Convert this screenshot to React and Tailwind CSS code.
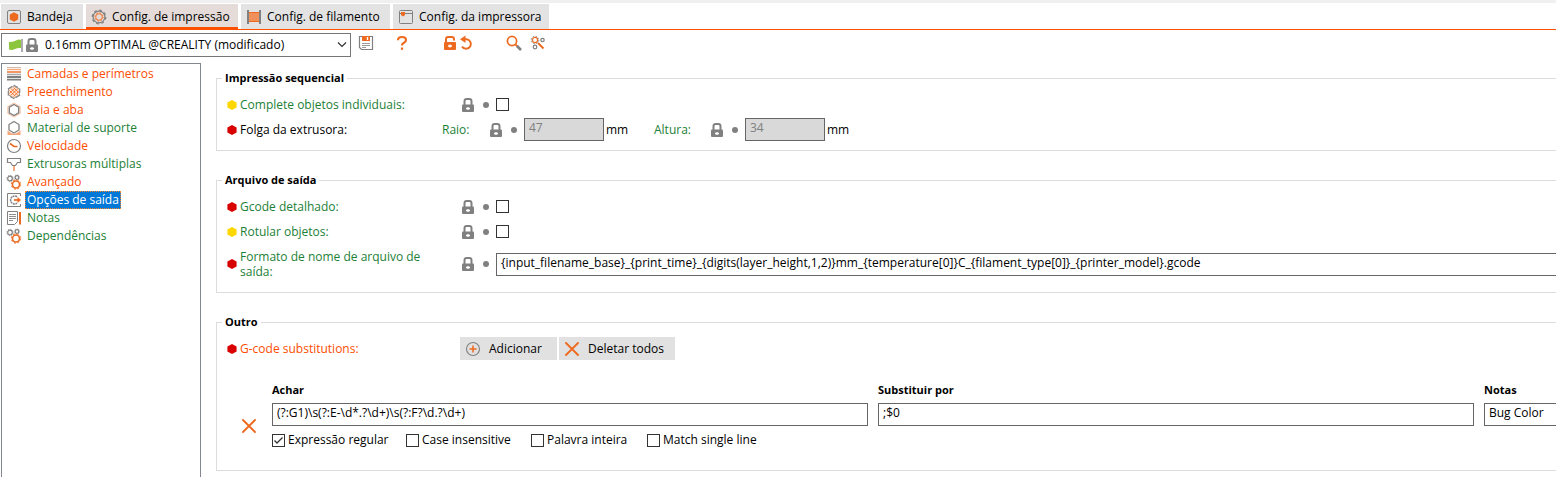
import { useState } from "react";

const GRAY = "#808080";
const ORANGE = "#ed6b21";

function Svg({ w = 16, h = 16, className = "", children }) {
  return (
    <svg width={w} height={h} viewBox={`0 0 ${w} ${h}`} fill="none" className={`shrink-0 ${className}`} aria-hidden="true">
      {children}
    </svg>
  );
}

function LockIcon() {
  return (
    <Svg w={12} h={14}>
      <path d="M2.5 8V3.2Q2.5 1 4.7 1H7.3Q9.5 1 9.5 3.2V8" stroke={GRAY} strokeWidth="2" />
      <rect y="6.5" width="12" height="7.5" rx="1" fill={GRAY} />
      <path d="M4 10.5H8M6 9V12" stroke="#fff" strokeWidth="1.3" />
    </Svg>
  );
}

function UnlockIcon() {
  return (
    <Svg w={12} h={14}>
      <path d="M2 8V3.2Q2 1 4.2 1H7.8Q10 1 10 3.2V4.5" stroke={ORANGE} strokeWidth="2" />
      <rect y="6" width="12" height="8" rx="1" fill={ORANGE} />
      <path d="M4 10H8M6 8.5V11.5" stroke="#fff" strokeWidth="1.3" />
    </Svg>
  );
}

function CrossIcon({ size = 14 }) {
  return (
    <svg width={size} height={size} viewBox="0 0 14 14" className="shrink-0" aria-hidden="true">
      <path d="M1 1L13 13M13 1L1 13" stroke={ORANGE} strokeWidth="1.9" strokeLinecap="round" />
    </svg>
  );
}

const Gears = () => (
  <Svg>
    <circle cx="4" cy="4.5" r="2.3" stroke={GRAY} strokeWidth="1.2" />
    <circle cx="4" cy="4.5" r="3.2" stroke={GRAY} strokeWidth="0.8" strokeDasharray="1.2 1.3" />
    <circle cx="11" cy="3.5" r="1.8" stroke={GRAY} strokeWidth="1.2" />
    <circle cx="11" cy="3.5" r="2.6" stroke={GRAY} strokeWidth="0.7" strokeDasharray="1 1" />
    <circle cx="10" cy="10.5" r="3.5" stroke={ORANGE} strokeWidth="1.6" />
    <circle cx="10" cy="10.5" r="4.7" stroke={ORANGE} strokeWidth="1" strokeDasharray="1.9 1.8" />
  </Svg>
);

const HEX = "M8 1.8L13.4 4.9V11.1L8 14.2L2.6 11.1V4.9Z";

const icons = {
  plater: (
    <Svg>
      <rect x="1.5" y="1.5" width="13" height="13" rx="1.5" stroke={GRAY} />
      <path d="M8 3.2L12.2 5.6V10.4L8 12.8L3.8 10.4V5.6Z" fill={ORANGE} />
    </Svg>
  ),
  print: (
    <Svg>
      <circle cx="8" cy="8" r="5.9" stroke={GRAY} strokeWidth="1.2" />
      <circle cx="8" cy="8" r="6.8" stroke={GRAY} strokeWidth="1.2" strokeDasharray="2.7 2.64" />
      <circle cx="8" cy="8" r="3.3" stroke={ORANGE} strokeWidth="0.9" />
      <circle cx="8" cy="8" r="4.1" stroke={ORANGE} strokeWidth="0.9" strokeDasharray="1.6 1.62" />
    </Svg>
  ),
  filament: (
    <Svg>
      <rect x="2.5" y="3" width="11" height="10" fill="#f0905a" />
      <path d="M2.5 3.5H13.5M2.5 12.5H13.5" stroke={ORANGE} />
      <path d="M2 1V15M14 1V15" stroke={GRAY} strokeWidth="2" />
    </Svg>
  ),
  printer: (
    <Svg>
      <rect x="1.5" y="1.5" width="13" height="13" rx="1" stroke={GRAY} />
      <path d="M2 4.5H14" stroke={GRAY} />
      <path d="M3 3H7V6L5 7.5L3 6Z" fill={ORANGE} />
    </Svg>
  ),
  layers: (
    <Svg>
      <path d="M1 1.5H15" stroke="#d0b8ac" />
      <path d="M1 3.5H15" stroke="#f4a97e" strokeWidth="1.4" />
      <path d="M1 6H15" stroke={ORANGE} strokeWidth="1.4" />
      <path d="M1 8.5H15" stroke="#aaaaaa" strokeWidth="1.6" />
      <path d="M1 11H15M1 13.7H15" stroke={GRAY} strokeWidth="1.8" />
    </Svg>
  ),
  infill: (
    <Svg>
      <path d={HEX} stroke={GRAY} strokeWidth="1.8" strokeDasharray="4.2 2" />
      <path d={HEX} fill="#fde3d3" stroke={GRAY} strokeWidth="0.8" />
      <path
        d="M3.5 6.5L9.5 12.5M5.2 4.8L11.8 11.2M7.5 3.5L12.7 8.7M3.5 9.5L9.5 3.5M4.5 11.5L12 4.500M7.500 12.500L12.700 7.500"
        stroke={ORANGE}
        strokeWidth="0.8"
      />
    </Svg>
  ),
  skirt: (
    <Svg>
      <path d="M8 1L14.2 4.500V11.500L8 15L1.800 11.500V4.500Z" stroke="#f8c09e" />
      <path d="M8 2.500L12.700 5.200V10.800L8 13.500L3.300 10.800V5.200Z" stroke={GRAY} strokeWidth="1.4" />
    </Svg>
  ),
  support: (
    <Svg>
      <path d="M1.500 10.500L5 13L8 14L11 13L14.500 10.500V15H1.500Z" fill="#f5a679" />
      <path d="M8 1.500L13 4.500V10L8 13L3 10V4.500Z" fill="#fff" stroke={GRAY} strokeWidth="1.3" />
    </Svg>
  ),
  speed: (
    <Svg>
      <circle cx="8" cy="8" r="6.500" stroke={GRAY} strokeWidth="1.200" />
      <path d="M4 5.500L8 8.500H11.500" stroke={ORANGE} strokeWidth="1.600" />
    </Svg>
  ),
  extruders: (
    <Svg>
      <path d="M1.500 2.500H14.500V6.500H11.500L9.500 9.500H6.500L4.500 6.500H1.500Z" stroke={GRAY} strokeWidth="1.200" />
      <path d="M8 10V15" stroke="#f4a272" strokeWidth="1.800" />
    </Svg>
  ),
  gears: <Gears />,
  output: (
    <Svg>
      <path d="M14.500 4V1.500H1.500V14.500H14.500V12" stroke={GRAY} />
      <path d="M11 4.800A4 4 0 1 0 11 11.200" stroke={GRAY} strokeWidth="1.500" strokeDasharray="2 0.600" />
      <path d="M8 8H13" stroke={ORANGE} strokeWidth="1.800" />
      <path d="M11.500 5L15 8L11.500 11Z" fill={ORANGE} />
    </Svg>
  ),
  notes: (
    <Svg>
      <path d="M11.500 1.500H1.500V14.500H8.500L11.500 11.500Z" stroke={GRAY} />
      <path d="M3 4.500H10M3 6.500H10M3 8.500H10M3 10.500H7" stroke={GRAY} strokeWidth="0.900" />
      <path d="M14 2V14.500" stroke={ORANGE} strokeWidth="2" />
    </Svg>
  ),
};

const tabs = [
  { icon: "plater", label: "Bandeja", width: "w-[82px]" },
  { icon: "print", label: "Config. de impressão", width: "w-[152px]", active: true },
  { icon: "filament", label: "Config. de filamento", width: "w-[149px]" },
  { icon: "printer", label: "Config. da impressora", width: "w-[156px]" },
];

const pages = [
  { icon: "layers", label: "Camadas e perímetros", changed: true },
  { icon: "infill", label: "Preenchimento", changed: true },
  { icon: "skirt", label: "Saia e aba", changed: true },
  { icon: "support", label: "Material de suporte" },
  { icon: "speed", label: "Velocidade", changed: true },
  { icon: "extruders", label: "Extrusoras múltiplas" },
  { icon: "gears", label: "Avançado", changed: true },
  { icon: "output", label: "Opções de saída" },
  { icon: "notes", label: "Notas" },
  { icon: "gears", label: "Dependências" },
];

function Checkbox({ id, defaultChecked }) {
  const [on, setOn] = useState(!!defaultChecked);
  return (
    <span className="grid shrink-0">
      <input
        id={id}
        type="checkbox"
        checked={on}
        onChange={(e) => setOn(e.target.checked)}
        className="col-start-1 row-start-1 size-[13px] appearance-none border border-[#333] bg-white"
      />
      {on && (
        <Svg w={13} h={13} className="pointer-events-none col-start-1 row-start-1">
          <path d="M2.500 6.500L5 9L10.500 3.500" stroke="#333" strokeWidth="1.300" />
        </Svg>
      )}
    </span>
  );
}

function ModeDot({ color }) {
  return (
    <Svg w={10} h={10}>
      <path d="M5 0L9.600 2.500V7.500L5 10L0.400 7.500V2.500Z" fill={color} />
    </Svg>
  );
}

function Marks() {
  return (
    <span className="flex shrink-0 items-center gap-[9px] pr-[7px]">
      <LockIcon />
      <span className="size-1.5 rounded-full bg-[#808080]" />
    </span>
  );
}

const RED = "#d90000";
const YELLOW = "#ffd700";
const field = "h-[23px] border border-[#666] bg-white pb-1 pl-1 text-black outline-none";

function Group({ title, children }) {
  return (
    <fieldset className="min-w-0 border border-r-0 border-[#dcdcdc] pt-1.5 pb-2 pl-2.5">
      <legend className="-ml-[5px] px-[3px] text-[11px]/4 font-bold">{title}</legend>
      {children}
    </fieldset>
  );
}

function Row({ mode, label, htmlFor, tone = "text-[#1c8036]", labelWidth = "w-[222px]", height = "h-[25px]", children }) {
  return (
    <div className={`flex items-center ${height}`}>
      <ModeDot color={mode} />
      <label htmlFor={htmlFor} className={`ml-[3px] shrink-0 leading-[15px] ${labelWidth} ${tone}`}>
        {label}
      </label>
      {children}
    </div>
  );
}

function Option({ id, label, width, defaultChecked }) {
  return (
    <div className={`flex items-center gap-[3px] whitespace-nowrap ${width}`}>
      <Checkbox id={id} defaultChecked={defaultChecked} />
      <label htmlFor={id}>{label}</label>
    </div>
  );
}

const toolButton = "flex h-4 items-center justify-center";

export default function App() {
  const [page, setPage] = useState("Opções de saída");
  return (
    <div className="flex min-h-screen flex-col overflow-hidden bg-white font-['Open_Sans','Noto_Sans',sans-serif] text-[12px]/4 text-black">
      <div className="h-[3px] bg-[#f0f0f0]" />
      <div role="tablist" className="flex h-[27px] gap-[3px] border-b border-[#ff5000] pt-px pl-px">
        {tabs.map((t) => (
          <button
            key={t.label}
            role="tab"
            aria-selected={!!t.active}
            className={`flex shrink-0 items-center gap-[5px] pl-[5px] whitespace-nowrap ${t.width} ${
              t.active ? "border-b-2 border-[#ff5000] bg-[#e5dcd9] pt-0.5" : "bg-[#e3e3e3]"
            }`}
          >
            {icons[t.icon]}
            {t.label}
          </button>
        ))}
      </div>

      <div className="flex items-start pt-[3px] pl-px">
        <div className="relative w-[350px] shrink-0">
          <select aria-label="Perfil de impressão" className="h-6 w-full appearance-none border border-[#767676] bg-white pl-[43px]">
            <option>0.16mm OPTIMAL @CREALITY (modificado)</option>
          </select>
          <span className="pointer-events-none absolute inset-y-0 left-2 flex items-center gap-[3px]">
            <Svg w={14} h={14}>
              <path d="M0 4Q4 4 7 2.500T12 2V10Q9 9.500 6 11T0 11.500Z" fill="#8cc63f" />
              <path d="M13 1V14" stroke={GRAY} strokeWidth="1.300" />
            </Svg>
            <LockIcon />
          </span>
          <span className="pointer-events-none absolute inset-y-0 right-1 flex items-center">
            <Svg w={10} h={6}>
              <path d="M1 0.500L5 4.500L9 0.500" stroke="#333" strokeWidth="1.200" />
            </Svg>
          </span>
        </div>
        <div className="flex items-center pt-0.5 pl-[7px]">
          <button aria-label="Salvar" className={toolButton}>
            <Svg>
              <path d="M1.500 1.500H14.500V14.500H3.500L1.500 12.500Z" stroke={GRAY} strokeWidth="1.200" />
              <rect x="4" y="1" width="8" height="5" fill={ORANGE} />
              <path d="M9.500 2V5" stroke="#fff" strokeWidth="1.400" />
              <path d="M4 8.500H12M4 10.500H12M4 12.500H8" stroke="#999" />
            </Svg>
          </button>
          <button aria-label="Ajuda" className={`ml-5 ${toolButton}`}>
            <Svg>
              <path d="M4 5.200Q4 2 8 2Q12 2 12 5Q12 6.800 10 7.800Q8 8.800 8 10.500" stroke={ORANGE} strokeWidth="2.200" />
              <rect x="6.900" y="12.500" width="2.200" height="2.300" fill={ORANGE} />
            </Svg>
          </button>
          <button aria-label="Desbloquear" className={`ml-[34px] ${toolButton}`}>
            <UnlockIcon />
          </button>
          <button aria-label="Desfazer" className={`ml-0.5 ${toolButton}`}>
            <Svg>
              <path d="M5 4.200H8.500A4.800 4.800 0 1 1 4 11.500" stroke={ORANGE} strokeWidth="2" />
              <path d="M7.500 0.500V8L2 4.200Z" fill={ORANGE} />
            </Svg>
          </button>
          <button aria-label="Procurar" className={`ml-8 ${toolButton}`}>
            <Svg>
              <circle cx="6" cy="6" r="4.600" stroke={ORANGE} strokeWidth="1.700" />
              <path d="M9.500 9.500L11.500 11.500" stroke={ORANGE} strokeWidth="1.800" />
              <path d="M11 11L15 15" stroke={GRAY} strokeWidth="2.600" />
            </Svg>
          </button>
          <button aria-label="Comparar" className={`ml-2 ${toolButton}`}>
            <Svg>
              <circle cx="5" cy="5" r="2.600" stroke={ORANGE} strokeWidth="1.200" />
              <circle cx="5" cy="5" r="3.800" stroke={GRAY} strokeWidth="0.900" strokeDasharray="1.500 1.500" />
              <circle cx="12.500" cy="5" r="1.700" stroke={GRAY} strokeWidth="1.200" />
              <circle cx="5" cy="12" r="1.800" stroke={GRAY} strokeWidth="1.200" />
              <path d="M8 8L13.500 13.500" stroke={ORANGE} strokeWidth="2" />
            </Svg>
          </button>
        </div>
      </div>

      <div className="flex flex-1 pt-1.5 pl-px">
        <nav className="w-[200px] shrink-0 border border-b-0 border-[#828790] pt-px pl-1">
          {pages.map((p) => (
            <button key={p.label} onClick={() => setPage(p.label)} className="flex h-[18px] items-center gap-[3px]">
              {icons[p.icon]}
              <span
                className={`flex h-[18px] items-center border px-px whitespace-nowrap ${
                  page === p.label
                    ? "border-dotted border-[#ff8728] bg-[#0078d7] text-white"
                    : p.changed
                      ? "border-transparent text-[#fc4d01]"
                      : "border-transparent text-[#1c8036]"
                }`}
              >
                {p.label}
              </span>
            </button>
          ))}
        </nav>

        <main className="flex min-w-0 flex-1 flex-col gap-[21px] pt-[7px] pb-1.5 pl-[15px]">
          <Group title="Impressão sequencial">
            <Row mode={YELLOW} label="Complete objetos individuais:" htmlFor="complete">
              <Marks />
              <Checkbox id="complete" />
            </Row>
            <Row mode={RED} label="Folga da extrusora:" htmlFor="radius" tone="text-black" labelWidth="w-[202px]">
              <label htmlFor="radius" className="w-12 shrink-0 text-[#1c8036]">
                Raio:
              </label>
              <Marks />
              <input id="radius" disabled defaultValue="47" className="h-[23px] w-20 border border-[#666] bg-[#d9d9d9] pb-1 pl-1 text-[#808080]" />
              <span className="w-[50px] shrink-0 pl-0.5">mm</span>
              <label htmlFor="height" className="w-[57px] shrink-0 text-[#1c8036]">
                Altura:
              </label>
              <Marks />
              <input id="height" disabled defaultValue="34" className="h-[23px] w-20 border border-[#666] bg-[#d9d9d9] pb-1 pl-1 text-[#808080]" />
              <span className="pl-0.5">mm</span>
            </Row>
          </Group>

          <Group title="Arquivo de saída">
            <Row mode={RED} label="Gcode detalhado:" htmlFor="verbose">
              <Marks />
              <Checkbox id="verbose" />
            </Row>
            <Row mode={YELLOW} label="Rotular objetos:" htmlFor="labels">
              <Marks />
              <Checkbox id="labels" />
            </Row>
            <Row
              mode={RED}
              label={<span className="block w-[190px]">Formato de nome de arquivo de saída:</span>}
              htmlFor="format"
              height="h-10"
            >
              <Marks />
              <input
                id="format"
                defaultValue="{input_filename_base}_{print_time}_{digits(layer_height,1,2)}mm_{temperature[0]}C_{filament_type[0]}_{printer_model}.gcode"
                className={`min-w-0 flex-1 border-r-0 ${field}`}
              />
            </Row>
          </Group>

          <Group title="Outro">
            <Row mode={RED} label="G-code substitutions:" tone="text-[#fc4d01]" labelWidth="w-[220px]">
              <button className="flex h-[23px] w-[97px] items-center gap-2 bg-[#e1e1e1] pl-[5px]">
                <Svg>
                  <circle cx="8" cy="8" r="6.500" stroke={GRAY} strokeWidth="1.100" />
                  <path d="M8 4.500V11.500M4.500 8H11.500" stroke={ORANGE} strokeWidth="1.500" />
                </Svg>
                Adicionar
              </button>
              <button className="ml-0.5 flex h-[23px] w-[116px] items-center gap-[9px] bg-[#e1e1e1] pl-1.5">
                <CrossIcon />
                Deletar todos
              </button>
            </Row>
            <div className="mt-[21px] flex items-start pl-[15px]">
              <button aria-label="Remover substituição" className="mt-[37px] mr-4 shrink-0">
                <CrossIcon />
              </button>
              <div className="grid min-w-0 flex-1 grid-cols-[596fr_596fr_72fr] gap-x-2.5">
                <div className="flex min-w-0 flex-col">
                  <label htmlFor="find" className="mb-[5px] text-[11px]/4 font-bold">
                    Achar
                  </label>
                  <input id="find" defaultValue="(?:G1)\s(?:E-\d*.?\d+)\s(?:F?\d.?\d+)" className={`w-full ${field}`} />
                  <div className="mt-1.5 mb-3.5 flex">
                    <Option id="regex" label="Expressão regular" width="w-[134px]" defaultChecked />
                    <Option id="case" label="Case insensitive" width="w-[125px]" />
                    <Option id="whole" label="Palavra inteira" width="w-[116px]" />
                    <Option id="single" label="Match single line" width="w-[116px]" />
                  </div>
                </div>
                <div className="flex min-w-0 flex-col">
                  <label htmlFor="replace" className="mb-[5px] text-[11px]/4 font-bold">
                    Substituir por
                  </label>
                  <input id="replace" defaultValue=";$0" className={`w-full ${field}`} />
                </div>
                <div className="flex min-w-0 flex-col">
                  <label htmlFor="notes" className="mb-[5px] text-[11px]/4 font-bold">
                    Notas
                  </label>
                  <input id="notes" defaultValue="Bug Color" className={`w-full border-r-0 ${field}`} />
                </div>
              </div>
            </div>
          </Group>
        </main>
      </div>
    </div>
  );
}
